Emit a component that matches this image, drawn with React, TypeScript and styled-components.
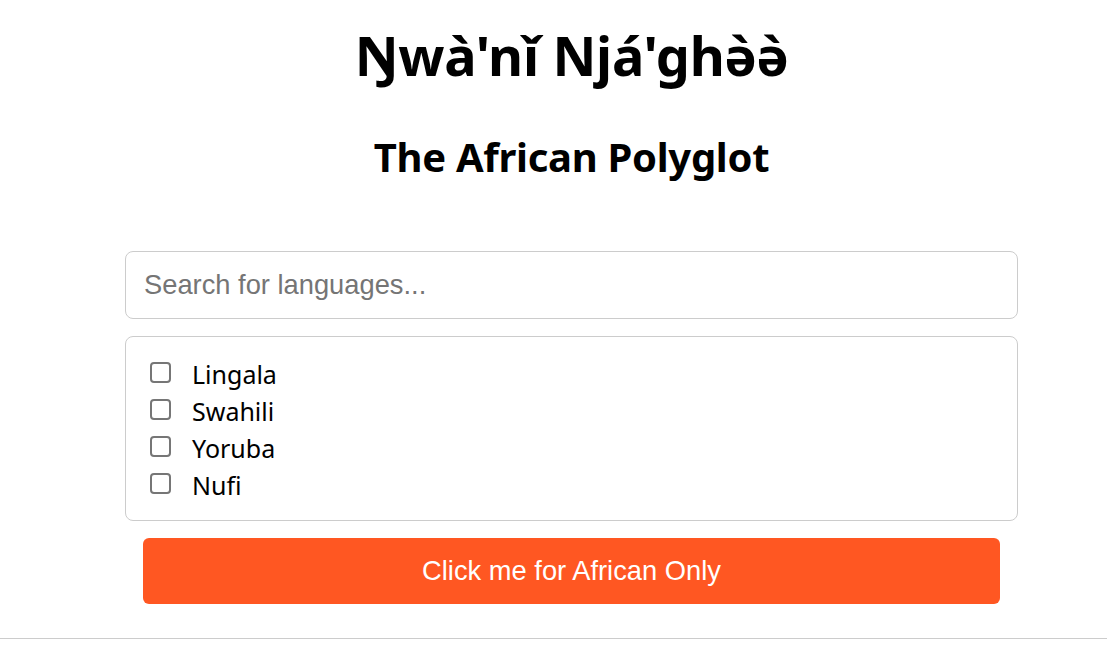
import React, { useState } from "react"
import styled, { createGlobalStyle } from "styled-components"

const languages = ["Lingala", "Swahili", "Yoruba", "Nufi"]

export default function App() {
    const [query, setQuery] = useState("")
    const [checked, setChecked] = useState<string[]>([])

    const toggle = (lang: string) =>
        setChecked(c => c.includes(lang) ? c.filter(l => l !== lang) : [...c, lang])

    const shown = languages.filter(l => l.toLowerCase().includes(query.toLowerCase()))

    return <Page>
        <GlobalStyle />
        <Main>
            <Title>Ŋwà'nǐ Njá'ghə̀ə̀</Title>
            <Subtitle>The African Polyglot</Subtitle>
            <Search
                placeholder="Search for languages..."
                value={query}
                onChange={e => setQuery(e.target.value)}
            />
            <List>
                {shown.map(lang => (
                    <Item key={lang}>
                        <Check
                            type="checkbox"
                            checked={checked.includes(lang)}
                            onChange={() => toggle(lang)}
                        />
                        {lang}
                    </Item>
                ))}
            </List>
            <Button>Click me for African Only</Button>
        </Main>
        <Footer />
    </Page>
}

const GlobalStyle = createGlobalStyle`
  body {
    margin: 0;
    background: #fff;
    font-family: "Noto Sans", "Open Sans", sans-serif;
    color: #000;
  }
`
const Page = styled.div`
  display: flex;
  flex-direction: column;
  min-height: 647px;
`
const Main = styled.main`
  width: 893px;
  margin: 0 89px 0 125px;
  display: flex;
  flex-direction: column;
  align-items: center;
`
const Title = styled.h1`
  margin: 23px 0 0;
  font-size: 54px;
  line-height: 64px;
  font-weight: 700;
  letter-spacing: -0.3px;
`
const Subtitle = styled.h2`
  margin: 46px 0 0;
  font-size: 40px;
  line-height: 48px;
  font-weight: 700;
  letter-spacing: -0.3px;
`
const Search = styled.input`
  box-sizing: border-box;
  width: 100%;
  height: 68px;
  margin-top: 70px;
  padding: 0 18px;
  border: 1px solid #ccc;
  border-radius: 8px;
  font-family: "Liberation Sans", Arial, sans-serif;
  font-size: 27.3px;
  color: #000;
  outline: none;

  &::placeholder {
    color: #757575;
  }
`
const List = styled.div`
  box-sizing: border-box;
  width: 100%;
  margin-top: 17px;
  padding: 18px 24px 17px;
  border: 1px solid #ccc;
  border-radius: 8px;
  display: flex;
  flex-direction: column;
`
const Item = styled.label`
  display: flex;
  align-items: center;
  gap: 21px;
  height: 37px;
  font-size: 25px;
  cursor: pointer;
`
const Check = styled.input`
  appearance: none;
  box-sizing: border-box;
  width: 21px;
  height: 21px;
  margin: 0 0 2px;
  border: 2px solid #767676;
  border-radius: 4px;
  background: #fff;
  cursor: pointer;

  &:checked {
    background: #0075ff;
    border-color: #0075ff;
  }
`
const Button = styled.button`
  width: calc(100% - 36px);
  height: 66px;
  margin-top: 17px;
  border: none;
  border-radius: 6px;
  background: #ff5722;
  color: #fff;
  font-family: "Liberation Sans", Arial, sans-serif;
  font-size: 27.3px;
  cursor: pointer;
`
const Footer = styled.footer`
  margin-top: 34px;
  border-top: 1px solid #ccc;
  height: 8px;
`
